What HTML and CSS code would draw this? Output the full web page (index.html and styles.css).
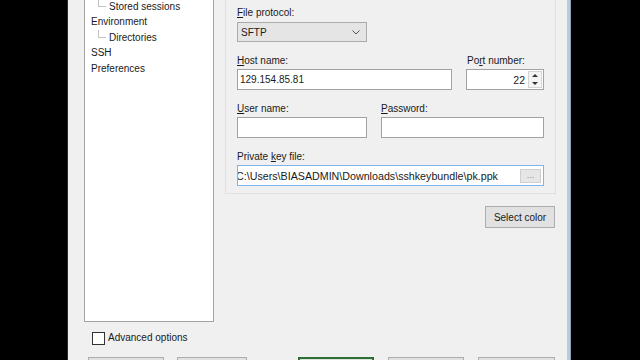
FILE: index.html
```html
<html><head>
<meta charset="UTF-8">
<meta name="viewport" content="width=device-width, initial-scale=1.0">
<title>Login</title>
<link rel="stylesheet" href="styles.css">
</head>
<body>
  <div class="dialog">
    <div class="dialog-body">
      <div class="tree">
        <ul class="tree-list">
          <li class="node">Session</li>
          <li class="node child"><span class="branch"></span>Stored sessions</li>
          <li class="node">Environment</li>
          <li class="node child"><span class="branch"></span>Directories</li>
          <li class="node">SSH</li>
          <li class="node">Preferences</li>
        </ul>
      </div>

      <div class="page">
        <div class="session-box">
          <div class="field">
            <label class="label"><u>F</u>ile protocol:</label>
            <div class="combo">
              <span>SFTP</span>
              <svg class="chevron" width="8" height="5" viewBox="0 0 8 5"><path d="M0.5 0.5 L4 4 L7.5 0.5" fill="none" stroke="#555" stroke-width="1"/></svg>
            </div>
          </div>

          <div class="row">
            <div class="field host">
              <label class="label"><u>H</u>ost name:</label>
              <div class="input"><span class="value">129.154.85.81</span></div>
            </div>
            <div class="field port">
              <label class="label port-label">Po<u>r</u>t number:</label>
              <div class="input spin-input">
                <span class="value">22</span>
                <div class="spinner">
                  <span class="spin up"></span>
                  <span class="spin down"></span>
                </div>
              </div>
            </div>
          </div>

          <div class="row">
            <div class="field user">
              <label class="label"><u>U</u>ser name:</label>
              <div class="input"></div>
            </div>
            <div class="field password">
              <label class="label"><u>P</u>assword:</label>
              <div class="input"></div>
            </div>
          </div>

          <div class="field">
            <label class="label">Private <u>k</u>ey file:</label>
            <div class="input focused">
              <span class="value path">C:\Users\BIASADMIN\Downloads\sshkeybundle\pk.ppk</span>
              <span class="browse">...</span>
            </div>
          </div>
        </div>

        <div class="page-actions">
          <button class="btn color-btn">Select color</button>
        </div>
      </div>
    </div>

    <div class="options">
      <label class="check"><span class="box"></span>Advanced options</label>
    </div>

    <div class="buttons">
      <div class="group">
        <button class="btn w76">Tools</button>
        <button class="btn w70">Manage</button>
      </div>
      <div class="group">
        <button class="btn w76 default">Login</button>
        <button class="btn w76">Close</button>
        <button class="btn w77">Help</button>
      </div>
    </div>
  </div>
</body></html>
```

FILE: styles.css
```css
html, body {
  margin: 0;
  padding: 0;
  height: 100%;
  overflow: hidden;
}
body {
  background-color: #000;
  font-family: 'Liberation Sans', Arial, sans-serif;
  font-size: 10px;
  color: #1a1a1a;
}
.dialog {
  margin-left: 67px;
  width: 499px;
  height: 400px;
  background-color: #f0f0f0;
  border-left: 1px solid #2a2a2a;
  border-right: 3px solid #b9cadc;
  box-shadow: 1px 0 0 #8fa4bb;
  display: flex;
  flex-direction: column;
}
.dialog-body {
  display: flex;
  padding-left: 16px;
  padding-right: 11px;
  gap: 11px;
  height: 322px;
}

/* tree */
.tree {
  width: 128px;
  height: 321px;
  background-color: #fff;
  border: 1px solid #a3a3a3;
  border-top: none;
  overflow: hidden;
}
.tree-list {
  list-style: none;
  margin: -17px 0 0 0;
  padding: 0 0 0 6px;
}
.node {
  display: flex;
  line-height: 15.5px;
  height: 15.5px;
  white-space: nowrap;
}
.node.child {
  padding-left: 7px;
}
.branch {
  width: 8px;
  height: 8px;
  margin-right: 3px;
  border-left: 1px solid #c4c4c4;
  border-bottom: 1px solid #c4c4c4;
  box-sizing: border-box;
}

/* session page */
.page {
  width: 331px;
  display: flex;
  flex-direction: column;
}
.session-box {
  border: 1px solid #e0e0e0;
  border-top: none;
  padding: 6px 11px 7px 11px;
  display: flex;
  flex-direction: column;
  gap: 12px;
}
.row {
  display: flex;
  gap: 14px;
}
.field {
  display: flex;
  flex-direction: column;
}
.label {
  display: block;
  height: 14px;
  line-height: 14px;
  margin-bottom: 1px;
}
.port-label {
  padding-left: 1px;
}
.host { width: 215px; }
.port { width: 78px; }
.user { width: 130px; }
.password { width: 163px; }

.combo {
  width: 130px;
  height: 20px;
  margin-top: 1px;
  box-sizing: border-box;
  border: 1px solid #acacac;
  background-color: #e5e5e5;
  display: flex;
  align-items: center;
  justify-content: space-between;
  padding: 0 6px 0 3px;
}
.chevron {
  display: block;
}
.input {
  height: 21px;
  box-sizing: border-box;
  border: 1px solid #a2a2a2;
  background-color: #fff;
  display: flex;
  align-items: center;
  overflow: hidden;
}
.value {
  padding-left: 2px;
  white-space: nowrap;
}
.spin-input .value {
  flex: 1;
  text-align: right;
  padding-right: 3px;
  font-size: 10.5px;
}
.spinner {
  width: 14px;
  height: 17px;
  margin-right: 1px;
  display: flex;
  flex-direction: column;
  border: 1px solid #d4d4d4;
  background-color: #f4f4f4;
  box-sizing: border-box;
}
.spin {
  flex: 1;
  display: flex;
  align-items: center;
  justify-content: center;
}
.spin.up::after {
  content: "";
  border-left: 3px solid transparent;
  border-right: 3px solid transparent;
  border-bottom: 3px solid #333;
}
.spin.down::after {
  content: "";
  border-left: 3px solid transparent;
  border-right: 3px solid transparent;
  border-top: 3px solid #333;
}
.input.focused {
  border-color: #7eb4ea;
  justify-content: space-between;
}
.path {
  padding-left: 0;
  margin-left: -2px;
  font-size: 10.7px;
}
.browse {
  width: 21px;
  height: 14px;
  margin-right: 2px;
  box-sizing: border-box;
  border: 1px solid #cfcfcf;
  background-color: #e6e6e6;
  color: #8a8a8a;
  font-size: 9px;
  line-height: 10px;
  text-align: center;
  flex-shrink: 0;
}

.page-actions {
  display: flex;
  justify-content: flex-end;
  margin-top: 12px;
  padding-right: 1px;
}

/* buttons */
.btn {
  font-family: 'Liberation Sans', Arial, sans-serif;
  font-size: 10px;
  color: #1a1a1a;
  height: 23px;
  padding: 0;
  background-color: #e1e1e1;
  border: 1px solid #adadad;
  box-sizing: border-box;
}
.color-btn {
  width: 70px;
  height: 22px;
}
.w70 { width: 70px; }
.w76 { width: 76px; }
.w77 { width: 77px; }
.btn.default {
  border: 2px solid #2f6f32;
}

.options {
  padding: 9px 0 0 24px;
  height: 14px;
}
.check {
  display: flex;
  align-items: center;
  gap: 3px;
  line-height: 14px;
}
.box {
  width: 13px;
  height: 13px;
  box-sizing: border-box;
  border: 1px solid #333;
  background-color: #fff;
}

.buttons {
  display: flex;
  justify-content: space-between;
  margin-top: 12px;
  padding: 0 12px 0 20px;
}
.group {
  display: flex;
  gap: 13px;
}
.group + .group {
  gap: 14px;
}
```
